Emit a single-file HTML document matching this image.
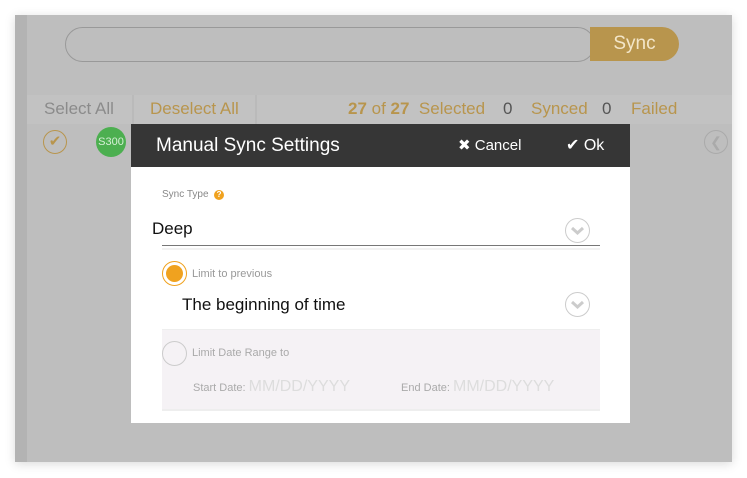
<!DOCTYPE html><html><head><style>
*{margin:0;padding:0;box-sizing:border-box}
body{width:747px;height:478px;background:#fff;position:relative;overflow:hidden;font-family:"Liberation Sans",sans-serif}
.a{position:absolute}
.cond{font-family:"Liberation Sans Narrow","Liberation Sans",sans-serif}
</style></head><body>
<div class="a" style="left:15px;top:15px;width:717px;height:447px;background:#bebebe;box-shadow:0 2px 10px rgba(0,0,0,.15)"></div>
<div class="a" style="left:15px;top:15px;width:12px;height:447px;background:#b3b3b3"></div>
<div class="a" style="top:27px;height:35px;border:1px solid #999;border-radius:18px;width:530px;left:65px"></div>
<div class="a" style="left:590px;top:27px;width:89px;height:34px;background:#b8954d;border-radius:0 17px 17px 0;color:#f3e6c9;font-size:19px;line-height:34px;text-align:center" ><span class="cond">Sync</span></div>
<div class="a" style="left:27px;top:95px;width:705px;height:29px;background:#c2c2c2"></div>
<div class="a" style="left:132px;top:95px;width:2px;height:29px;background:#bababa"></div>
<div class="a" style="left:255px;top:95px;width:2px;height:29px;background:#bababa"></div>
<div class="a cond" style="left:44px;top:99px;font-size:17px;color:#8b8b8b">Select All</div>
<div class="a cond" style="left:150px;top:99px;font-size:17px;color:#b8954d">Deselect All</div>
<div class="a cond" style="left:348px;top:99px;font-size:17px;color:#b8954d"><b>27</b> of <b>27</b>&nbsp; Selected</div>
<div class="a cond" style="left:503px;top:99px;font-size:17px;color:#555">0</div>
<div class="a cond" style="left:531px;top:99px;font-size:17px;color:#b8954d">Synced</div>
<div class="a cond" style="left:602px;top:99px;font-size:17px;color:#555">0</div>
<div class="a cond" style="left:631px;top:99px;font-size:17px;color:#b8954d">Failed</div>
<div class="a" style="left:43px;top:130px;width:24px;height:24px;border:1px solid #b8954d;border-radius:50%;color:#b8954d;text-align:center;line-height:22px;font-size:15px">✔</div>
<div class="a" style="left:96px;top:127px;width:30px;height:30px;background:#4caf50;border-radius:50%;color:#d6efd6;font-size:11px;text-align:center;line-height:30px">S300</div>
<div class="a" style="left:704px;top:130px;width:24px;height:24px;border:1px solid #aaa;border-radius:50%;color:#aaa;text-align:center;line-height:22px;font-size:14px">❮</div>
<div class="a" style="left:131px;top:124px;width:499px;height:43px;background:#363636"></div>
<div class="a cond" style="left:156px;top:135px;font-size:19px;color:#fff">Manual Sync Settings</div>
<div class="a cond" style="left:458px;top:136px;font-size:15px;color:#fff">✖ Cancel</div>
<div class="a cond" style="left:566px;top:135px;font-size:16px;color:#fff">✔ Ok</div>
<div class="a" style="left:131px;top:167px;width:499px;height:256px;background:#fff"></div>
<div class="a" style="left:162px;top:189px;font-size:10px;color:#888">Sync Type &nbsp;<span style="display:inline-block;width:10px;height:10px;border-radius:50%;background:#f0a21f;color:#fff;font-size:8px;line-height:10px;text-align:center;font-weight:bold">?</span></div>
<div class="a" style="left:152px;top:219px;font-size:17px;color:#111">Deep</div>
<div class="a" style="left:565px;top:218px;width:25px;height:25px;border:1px solid #ccc;border-radius:50%"></div>
<div class="a" style="left:162px;top:245px;width:438px;height:1px;background:#777"></div>
<div class="a" style="left:162px;top:248px;width:438px;height:2px;background:#f2f2f2"></div>
<div class="a" style="left:162px;top:261px;width:25px;height:25px;border:1px solid #f0a21f;border-radius:50%"></div>
<div class="a" style="left:166px;top:265px;width:17px;height:17px;background:#f0a21f;border-radius:50%"></div>
<div class="a" style="left:192px;top:268px;font-size:11px;color:#999">Limit to previous</div>
<div class="a" style="left:182px;top:295px;font-size:17px;color:#111">The beginning of time</div>
<div class="a" style="left:565px;top:292px;width:25px;height:25px;border:1px solid #ccc;border-radius:50%"></div>
<div class="a" style="left:162px;top:329px;width:438px;height:82px;background:#f5f2f5;border-top:1px solid #eee;border-bottom:2px solid #eee"></div>
<div class="a" style="left:162px;top:341px;width:25px;height:25px;border:1px solid #ccc;border-radius:50%"></div>
<div class="a" style="left:192px;top:347px;font-size:11px;color:#aaa">Limit Date Range to</div>
<div class="a" style="left:193px;top:378px;font-size:11px;color:#aaa">Start Date: <span style="font-size:16px;color:#ddd">MM/DD/YYYY</span></div>
<div class="a" style="left:401px;top:378px;font-size:11px;color:#aaa">End Date: <span style="font-size:16px;color:#ddd">MM/DD/YYYY</span></div>
<svg class="a" style="left:565px;top:218px" width="25" height="25"><path d="M7 10l5.5 5 5.5-5" stroke="#ccc" stroke-width="3" fill="none"/></svg>
<svg class="a" style="left:565px;top:292px" width="25" height="25"><path d="M7 10l5.5 5 5.5-5" stroke="#ccc" stroke-width="3" fill="none"/></svg>
</body></html>
